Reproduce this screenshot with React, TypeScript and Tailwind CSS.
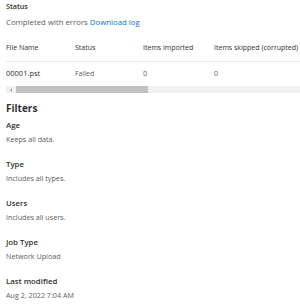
const filters = [
  { label: "Age", value: "Keeps all data." },
  { label: "Type", value: "Includes all types." },
  { label: "Users", value: "Includes all users." },
  { label: "Job Type", value: "Network Upload" },
  { label: "Last modified", value: "Aug 2, 2022 7:04 AM" },
];

const App = () => {
  return (
    <div
      className="w-[300px] h-[308px] overflow-hidden bg-white px-[6px] pt-[1px] text-[#323130]"
      style={{ fontFamily: '"Open Sans", "Noto Sans", sans-serif' }}
    >
      <div className="text-[7.2px] font-semibold leading-[10px]">Status</div>
      <div className="mt-[5px] text-[7.8px] leading-[12px] text-[#605e5c]">
        Completed with errors <span className="text-[#0078d4]">Download log</span>
      </div>

      <div className="mt-[12px] -mr-[6px]">
        <div className="flex items-start border-b border-[#edebe9] pt-[3px] pb-[8px] text-[7px] leading-[10px]">
          <div className="w-[69px]">File Name</div>
          <div className="w-[68px]">Status</div>
          <div className="w-[71px]">Items imported</div>
          <div>Items skipped (corrupted)</div>
        </div>
        <div className="flex h-[24px] items-center text-[7px] text-[#605e5c]">
          <div className="w-[69px] text-[7.5px] text-[#323130]">00001.pst</div>
          <div className="w-[68px]">Failed</div>
          <div className="w-[71px]">0</div>
          <div>0</div>
        </div>
        <div className="flex h-[7px] items-center bg-[#f1f1f1]">
          <div className="flex w-[10px] justify-center">
            <div className="h-0 w-0 border-y-[2px] border-r-[2px] border-y-transparent border-r-[#a0a0a0]" />
          </div>
          <div className="h-full w-[132px] bg-[#c1c1c1]" />
        </div>
      </div>

      <div className="mt-[9px] text-[10px] font-bold leading-[12px]">Filters</div>
      {filters.map((f, i) => (
        <div key={f.label} className={i === 0 ? "mt-[5px]" : "mt-[13px]"}>
          <div className="text-[7.8px] font-semibold leading-[12px]">{f.label}</div>
          <div className="mt-[2px] text-[7.2px] leading-[12px] text-[#605e5c]">{f.value}</div>
        </div>
      ))}
    </div>
  );
};

export default App;
